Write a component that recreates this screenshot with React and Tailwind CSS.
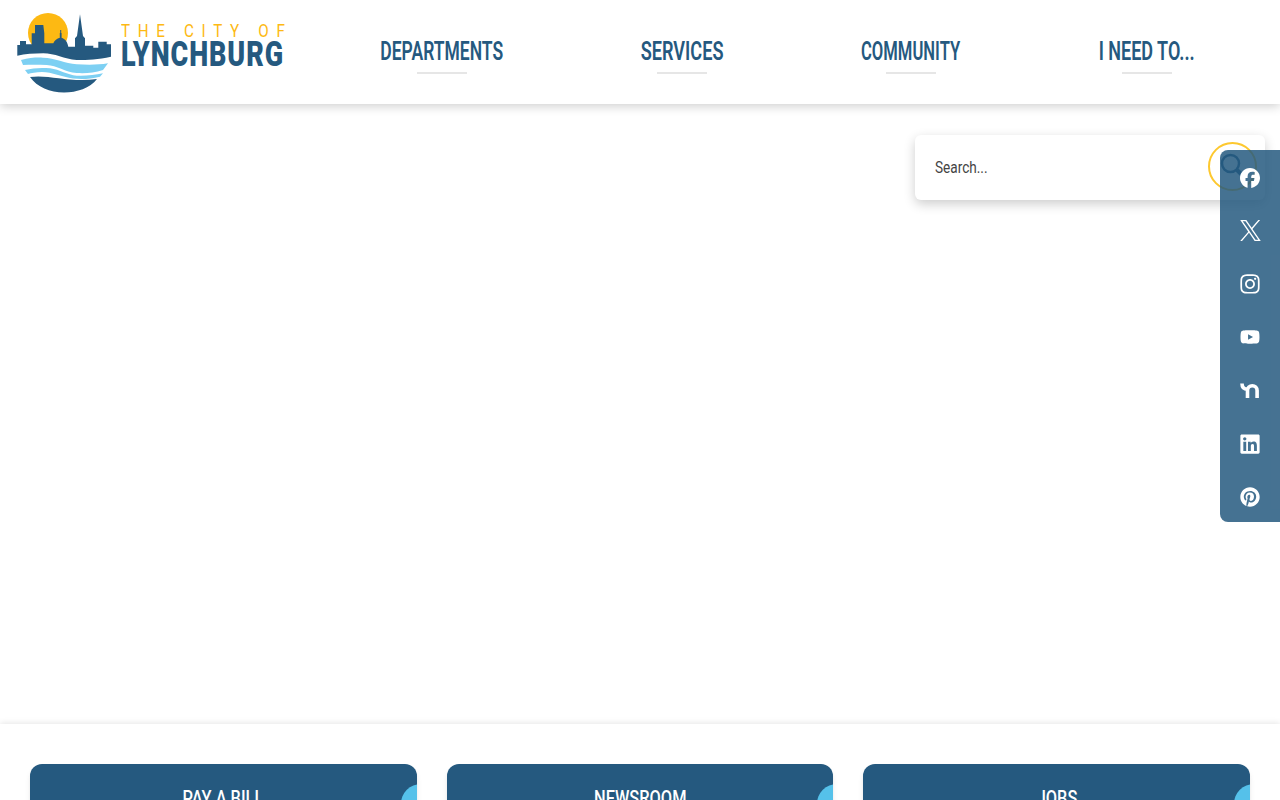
import { FaFacebook, FaInstagram, FaYoutube, FaLinkedin, FaPinterest } from 'react-icons/fa6';

const nav = [
  { label: 'DEPARTMENTS', width: 'w-[261px]', squeeze: 'scale-x-[0.7]' },
  { label: 'SERVICES', width: 'w-[220px]', squeeze: 'scale-x-[0.725]' },
  { label: 'COMMUNITY', width: 'w-[238px]', squeeze: 'scale-x-[0.665]' },
  { label: 'I NEED TO...', width: 'w-[234px]', squeeze: 'scale-x-[0.72]' },
];

function XIcon() {
  return (
    <svg viewBox="0 0 24 24" className="w-[21px] h-[21px]" fill="currentColor">
      <path d="M14.234 10.162 22.977 0h-2.072l-7.591 8.824L7.251 0H.258l9.168 13.343L.258 24H2.33l8.016-9.318L16.749 24h6.993zm-2.837 3.299-.929-1.329L3.076 1.56h3.182l5.965 8.532.929 1.329 7.754 11.09h-3.182z" />
    </svg>
  );
}

function NextdoorIcon() {
  return (
    <svg viewBox="0 0 20 15" className="w-[20px] h-[15px]" fill="none" stroke="currentColor" strokeWidth="3.6">
      <path d="M2 0.5C2 4 3.5 6.2 7.5 6.2" />
      <path d="M7.5 15V7.5a4.6 4.6 0 0 1 9.6 0V15" />
    </svg>
  );
}

const socials = [
  <FaFacebook size={20} />,
  <XIcon />,
  <FaInstagram size={22} />,
  <FaYoutube size={20} />,
  <NextdoorIcon />,
  <FaLinkedin size={22} />,
  <FaPinterest size={20} />,
];

const cards = ['PAY A BILL', 'NEWSROOM', 'JOBS'];

function LogoMark() {
  return (
    <svg viewBox="17 10 96 84" className="w-[96px] h-[84px] shrink-0">
      <circle cx="48" cy="33" r="20" fill="#fdb913" />
      <path
        d="M17.3 45L20 45V41H26V44.3H31.7V33.3H35V25H43.3L44.3 33.3V43.3H53.3C54.5 40.5 57 38.5 59.8 37.8V33H60.2V30H61.2V33H61.6V37.8C65 38.8 67.5 42 68.3 46.7H75V38.3L77 36L80 14.3L83 36L85 38.3V45.7H93.3V47.7H98.3V41.7H106.7V44.3H111V56.7C98 59.5 88 60 76.7 60C64 59 55 53.3 43.3 53.3C34 53.3 25 54 17.3 55.7Z"
        fill="#25597f"
      />
      <path d="M21 60C30 57.5 37 57.5 43 57.7C55 58 65 63.5 76.7 64.3C88 65 98 65 108 63.3L103 70C94 73 85 73.5 76.7 73C65 72 57 65.5 46.7 65C38 64.5 30 64.5 23 65Z" fill="#7dd0f3" />
      <path d="M25 70C33 68 41 67.5 50 68.3C60 69.5 67 75 76.7 75.7C85 76.2 95 75 103 73.3L100 76.7C90 79 82 79.5 73 78.5C62 77 52 72 42 72C36 72 31 73 28 74Z" fill="#7dd0f3" />
      <path d="M30 77C48 74 70 83 97 79C90 88 77 92.5 64 92.5C50 92.5 37 87 30 77Z" fill="#25597f" />
    </svg>
  );
}

function LogoText() {
  return (
    <div className="flex flex-col ml-[8px] mb-[12px] font-['Roboto',sans-serif]">
      <div className="text-[#fdb913] text-[19px] leading-[18px] tracking-[9.6px] font-normal whitespace-nowrap origin-left scale-x-[0.8]">THE CITY OF</div>
      <div className="text-[#25597f] text-[35px] leading-[30px] font-black tracking-[1.2px] whitespace-nowrap origin-left scale-x-[0.77]">LYNCHBURG</div>
    </div>
  );
}

export default function App() {
  return (
    <div className="relative h-[800px] overflow-hidden bg-white flex flex-col font-['Roboto',sans-serif]">
      <header className="relative z-10 h-[104px] shrink-0 bg-white shadow-[0_2px_10px_rgba(0,0,0,0.2)] flex items-center pl-[17px]">
        <div className="flex items-center w-[294px] shrink-0">
          <LogoMark />
          <LogoText />
        </div>
        <nav className="flex">
          {nav.map((item) => (
            <a key={item.label} className={`${item.width} flex flex-col items-center pt-[7px]`}>
              <span className={`text-[#25597f] text-[25px] leading-[30px] font-semibold whitespace-nowrap ${item.squeeze}`}>{item.label}</span>
              <span className="mt-[5px] w-[50px] h-[2px] bg-[#e6e6e6]"></span>
            </a>
          ))}
        </nav>
      </header>

      <main className="h-[620px] shrink-0 flex justify-end items-start pt-[31px] pr-[15px]">
        <div className="w-[350px] h-[65px] bg-white rounded-md shadow-[0_4px_12px_rgba(0,0,0,0.2)] flex items-center justify-between pl-[20px] pr-[8px]">
          <span className="text-[#444444] text-[17px] whitespace-nowrap origin-left scale-x-[0.8]">Search...</span>
          <div className="w-[49px] h-[49px] mb-[3px] rounded-full border-2 border-[#fdc82f] flex items-center justify-center">
            <svg viewBox="0 0 32 32" className="w-[32px] h-[32px] mr-[2px] mb-[2px]" fill="none" stroke="#25597f" strokeWidth="2.5">
              <circle cx="14.5" cy="14.5" r="8.5" />
              <path d="M21 21l7 7" strokeWidth="4" />
            </svg>
          </div>
        </div>
      </main>

      <section className="relative flex-1 bg-white shadow-[0_-1px_6px_rgba(0,0,0,0.1)] px-[30px] pt-[40px]">
        <div className="grid grid-cols-3 gap-[30px]">
          {cards.map((card) => (
            <div key={card} className="relative h-[120px] rounded-t-xl bg-[#25597f] overflow-hidden text-center pt-[22px] shadow-md">
              <span className="inline-block text-white text-[21px] leading-[24px] font-medium scale-x-[0.78]">{card}</span>
              <span className="absolute left-[calc(100%-16px)] top-[20px] w-[40px] h-[40px] rounded-full bg-[#55c1ea]"></span>
            </div>
          ))}
        </div>
      </section>

      <aside className="absolute z-20 right-0 top-[150px] w-[60px] h-[372px] pt-[1px] rounded-l-lg bg-[#25597f]/85 flex flex-col">
        {socials.map((icon, i) => (
          <a key={i} className="h-[53.2px] shrink-0 flex items-center justify-center text-white">
            {icon}
          </a>
        ))}
      </aside>
    </div>
  );
}
